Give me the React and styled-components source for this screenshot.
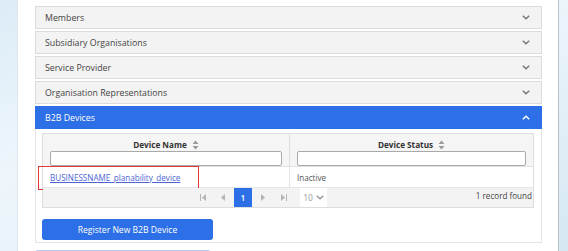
import React from "react";
import styled, { createGlobalStyle } from "styled-components";

const GlobalStyle = createGlobalStyle`
  html, body {
    margin: 0;
    padding: 0;
    height: 100%;
  }
  body {
    background: linear-gradient(160deg, #dcecf7 0%, #eef6fb 40%, #d6e8f3 100%);
    font-family: "Open Sans", "Noto Sans", sans-serif;
    overflow: hidden;
  }
`;

const sections = [
  "Members",
  "Subsidiary Organisations",
  "Service Provider",
  "Organisation Representations",
];

const Chevron = ({ up }) => (
  <svg width="8" height="5" viewBox="0 0 8 5">
    <path
      d={up ? "M0.8 4.3 L4 1.2 L7.2 4.3" : "M0.8 0.8 L4 3.8 L7.2 0.8"}
      fill="none"
      stroke="currentColor"
      strokeWidth="1.5"
    />
  </svg>
);

const SortIcon = () => (
  <svg width="7" height="10" viewBox="0 0 7 10">
    <path d="M0.5 4 L3.5 0.5 L6.5 4 Z M0.5 6 L3.5 9.5 L6.5 6 Z" fill="#9a9a9a" />
  </svg>
);

const PagerIcon = ({ kind }) => {
  const paths = {
    first: "M1 1 H2 V8 H1 Z M7 1 L3 4.5 L7 8 Z",
    prev: "M6 1 L2 4.5 L6 8 Z",
    next: "M2 1 L6 4.5 L2 8 Z",
    last: "M2 1 L6 4.5 L2 8 Z M7 1 H8 V8 H7 Z",
  };
  return (
    <svg width="9" height="9" viewBox="0 0 9 9">
      <path d={paths[kind]} fill="#b5b5b5" />
    </svg>
  );
};

const App = () => {
  return (
    <>
      <GlobalStyle />
      <Page>
        <Accordion>
          {sections.map((s) => (
            <Header key={s}>
              <span>{s}</span>
              <Chevron />
            </Header>
          ))}
          <Header $active>
            <span>B2B Devices</span>
            <Chevron up />
          </Header>
          <Body>
            <Table>
              <HeadRow>
                <HeadCell>
                  <HeadTitle>
                    Device Name <SortIcon />
                  </HeadTitle>
                  <Filter />
                </HeadCell>
                <HeadCell>
                  <HeadTitle>
                    Device Status <SortIcon />
                  </HeadTitle>
                  <Filter />
                </HeadCell>
              </HeadRow>
              <DataRow>
                <DataCell>
                  <DeviceLink href="#">BUSINESSNAME_planability_device</DeviceLink>
                  <Highlight />
                </DataCell>
                <DataCell>Inactive</DataCell>
              </DataRow>
              <Footer>
                <Pager>
                  <PageBtn>
                    <PagerIcon kind="first" />
                  </PageBtn>
                  <PageBtn>
                    <PagerIcon kind="prev" />
                  </PageBtn>
                  <PageBtn $active>1</PageBtn>
                  <PageBtn>
                    <PagerIcon kind="next" />
                  </PageBtn>
                  <PageBtn>
                    <PagerIcon kind="last" />
                  </PageBtn>
                  <PageSize>
                    10 <Chevron />
                  </PageSize>
                </Pager>
                <Count>1 record found</Count>
              </Footer>
            </Table>
            <RegisterButton>Register New B2B Device</RegisterButton>
          </Body>
        </Accordion>
        <NextButton />
      </Page>
    </>
  );
};

export default App;

const Page = styled.div`
  margin: 0 9px 0 17px;
  height: 251px;
  background: #fff;
  border-left: 1px solid #e2e6ea;
  border-right: 1px solid #b9c0c6;
  padding: 6px 16px 0 17px;
  box-sizing: border-box;
`;

const Accordion = styled.div`
  display: flex;
  flex-direction: column;
  gap: 2px;
`;

const Header = styled.div`
  height: 23px;
  box-sizing: border-box;
  display: flex;
  align-items: center;
  justify-content: space-between;
  padding: 0 11px 0 9px;
  font-size: 8.8px;
  border: 1px solid ${({ $active }) => ($active ? "#2c6fe6" : "#dcdcdc")};
  background: ${({ $active }) => ($active ? "#2c6fe6" : "#f3f3f3")};
  color: ${({ $active }) => ($active ? "#fff" : "#444")};
  & svg {
    color: ${({ $active }) => ($active ? "#fff" : "#777")};
  }
`;

const Body = styled.div`
  margin-top: -2px;
  border: 1px solid #e3e3e3;
  border-top: none;
  padding: 4px 7px 4px 6px;
  height: 114px;
  box-sizing: border-box;
`;

const Table = styled.div`
  border: 1px solid #dedede;
  display: flex;
  flex-direction: column;
`;

const HeadRow = styled.div`
  display: grid;
  grid-template-columns: 246px 1fr;
  background: #f5f5f5;
  border-bottom: 1px solid #e2e2e2;
  height: 32px;
`;

const HeadCell = styled.div`
  display: flex;
  flex-direction: column;
  align-items: stretch;
  padding: 4px 7px 0 7px;
  & + & {
    border-left: 1px solid #dedede;
  }
`;

const HeadTitle = styled.div`
  display: flex;
  align-items: center;
  justify-content: center;
  gap: 5px;
  font-size: 8.2px;
  font-weight: 700;
  color: #333;
  height: 13px;
`;

const Filter = styled.div`
  height: 13px;
  background: #fff;
  border: 1px solid #a9a9a9;
  border-radius: 2px;
`;

const DataRow = styled.div`
  display: grid;
  grid-template-columns: 246px 1fr;
  height: 20px;
  border-bottom: 1px solid #e6e6e6;
`;

const DataCell = styled.div`
  position: relative;
  display: flex;
  align-items: center;
  padding: 0 7px;
  font-size: 8.1px;
  color: #555;
  & + & {
    border-left: 1px solid #e6e6e6;
  }
`;

const DeviceLink = styled.a`
  color: #4b63d6;
  text-decoration: underline;
`;

const Highlight = styled.div`
  position: absolute;
  left: -5px;
  top: -1px;
  width: 161px;
  height: 24px;
  border: 1.5px solid #e53935;
  box-sizing: border-box;
  pointer-events: none;
`;

const Footer = styled.div`
  display: flex;
  justify-content: flex-end;
  align-items: flex-start;
  background: #f3f3f3;
  height: 19px;
  position: relative;
`;

const Pager = styled.div`
  position: absolute;
  left: 151px;
  top: 0;
  height: 19px;
  display: flex;
  align-items: stretch;
  gap: 2px;
`;

const PageBtn = styled.div`
  width: 18px;
  display: flex;
  align-items: center;
  justify-content: center;
  font-size: 8.5px;
  font-weight: 600;
  background: ${({ $active }) => ($active ? "#2c6fe6" : "transparent")};
  color: #fff;
`;

const PageSize = styled.div`
  margin-left: 6px;
  width: 27px;
  background: #fff;
  display: flex;
  align-items: center;
  justify-content: center;
  gap: 3px;
  font-size: 8.5px;
  color: #999;
  & svg {
    color: #999;
  }
`;

const Count = styled.div`
  font-size: 8.1px;
  color: #444;
  padding-top: 2px;
  padding-right: 1px;
`;

const RegisterButton = styled.button`
  margin-top: 11px;
  display: block;
  width: 171px;
  height: 21px;
  border: none;
  border-radius: 3px;
  background: #2c6fe6;
  color: #fff;
  font-family: "Open Sans", "Noto Sans", sans-serif;
  font-size: 8.6px;
`;

const NextButton = styled.div`
  margin-top: 7px;
  width: 176px;
  height: 10px;
  border-top: 1.5px solid #b3cbf3;
  border-radius: 3px 3px 0 0;
`;
